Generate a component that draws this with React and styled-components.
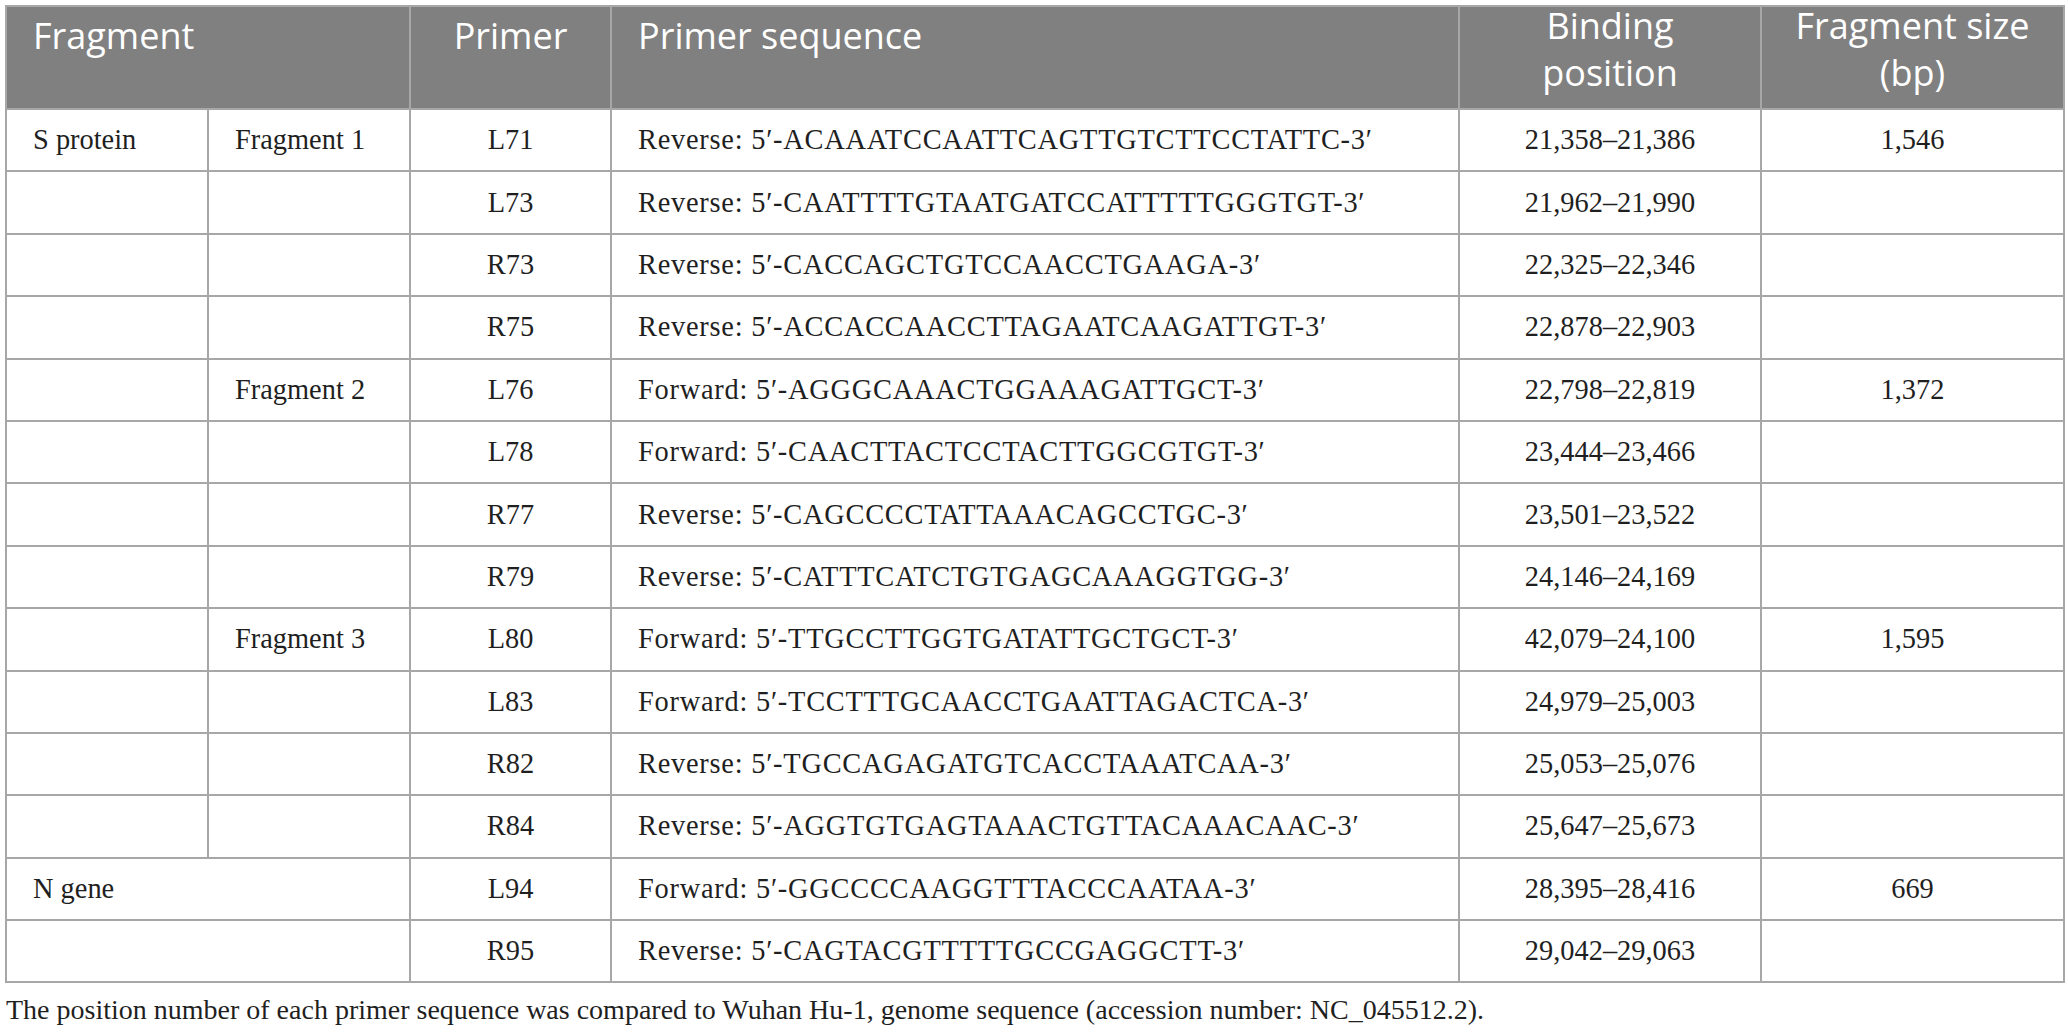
import React from 'react'
import styled, { createGlobalStyle } from 'styled-components'

const GlobalStyle = createGlobalStyle`
    body {
        margin: 0;
        background: #ffffff;
    }
`

const Page = styled.div`
    padding: 5px 0 0 5px;
`

const Table = styled.table`
    border-collapse: collapse;
    table-layout: fixed;
    width: 2058px;
    border: 2px solid #a7a7a7;
`

const HeadRow = styled.tr`
    height: 103px;
`

const HeadCell = styled.th`
    background: #808080;
    color: #ffffff;
    font-family: "Open Sans", "Noto Sans", sans-serif;
    font-weight: 400;
    font-size: 36px;
    line-height: 49px;
    text-align: ${(p) => p.$align || 'left'};
    vertical-align: top;
    padding: 4px 26px 0;
    border: 2px solid #a7a7a7;
`

const HeadLines = styled.span`
    display: block;
    line-height: 47px;
    margin-top: -9px;
`

const BodyRow = styled.tr`
    height: 62.4px;
`

const Cell = styled.td`
    font-family: "Liberation Serif", "Times New Roman", serif;
    font-size: 28.4px;
    color: #1f1f1f;
    text-align: ${(p) => p.$align || 'left'};
    letter-spacing: ${(p) => (p.$seq ? '0.75px' : '0')};
    vertical-align: middle;
    padding: 0 26px;
    border: 2px solid #a7a7a7;
    white-space: nowrap;
`

const Note = styled.p`
    margin: 11px 0 0 1px;
    font-family: "Liberation Serif", "Times New Roman", serif;
    font-size: 28px;
    color: #1f1f1f;
`

const rows = [
    ['S protein', 'Fragment 1', 'L71', 'Reverse: 5′-ACAAATCCAATTCAGTTGTCTTCCTATTC-3′', '21,358–21,386', '1,546'],
    ['', '', 'L73', 'Reverse: 5′-CAATTTTGTAATGATCCATTTTTGGGTGT-3′', '21,962–21,990', ''],
    ['', '', 'R73', 'Reverse: 5′-CACCAGCTGTCCAACCTGAAGA-3′', '22,325–22,346', ''],
    ['', '', 'R75', 'Reverse: 5′-ACCACCAACCTTAGAATCAAGATTGT-3′', '22,878–22,903', ''],
    ['', 'Fragment 2', 'L76', 'Forward: 5′-AGGGCAAACTGGAAAGATTGCT-3′', '22,798–22,819', '1,372'],
    ['', '', 'L78', 'Forward: 5′-CAACTTACTCCTACTTGGCGTGT-3′', '23,444–23,466', ''],
    ['', '', 'R77', 'Reverse: 5′-CAGCCCCTATTAAACAGCCTGC-3′', '23,501–23,522', ''],
    ['', '', 'R79', 'Reverse: 5′-CATTTCATCTGTGAGCAAAGGTGG-3′', '24,146–24,169', ''],
    ['', 'Fragment 3', 'L80', 'Forward: 5′-TTGCCTTGGTGATATTGCTGCT-3′', '42,079–24,100', '1,595'],
    ['', '', 'L83', 'Forward: 5′-TCCTTTGCAACCTGAATTAGACTCA-3′', '24,979–25,003', ''],
    ['', '', 'R82', 'Reverse: 5′-TGCCAGAGATGTCACCTAAATCAA-3′', '25,053–25,076', ''],
    ['', '', 'R84', 'Reverse: 5′-AGGTGTGAGTAAACTGTTACAAACAAC-3′', '25,647–25,673', ''],
]

const geneRows = [
    ['N gene', 'L94', 'Forward: 5′-GGCCCCAAGGTTTACCCAATAA-3′', '28,395–28,416', '669'],
    ['', 'R95', 'Reverse: 5′-CAGTACGTTTTTGCCGAGGCTT-3′', '29,042–29,063', ''],
]

export default function App() {
    return (
        <Page>
            <GlobalStyle />
            <Table>
                <colgroup>
                    <col style={{ width: 202 }} />
                    <col style={{ width: 202 }} />
                    <col style={{ width: 201 }} />
                    <col style={{ width: 848 }} />
                    <col style={{ width: 302 }} />
                    <col style={{ width: 303 }} />
                </colgroup>
                <thead>
                    <HeadRow>
                        <HeadCell colSpan={2}>Fragment</HeadCell>
                        <HeadCell $align="center">Primer</HeadCell>
                        <HeadCell>Primer sequence</HeadCell>
                        <HeadCell $align="center">
                            <HeadLines>Binding<br />position</HeadLines>
                        </HeadCell>
                        <HeadCell $align="center">
                            <HeadLines>Fragment size<br />(bp)</HeadLines>
                        </HeadCell>
                    </HeadRow>
                </thead>
                <tbody>
                    {rows.map((r, i) => (
                        <BodyRow key={i}>
                            <Cell>{r[0]}</Cell>
                            <Cell>{r[1]}</Cell>
                            <Cell $align="center">{r[2]}</Cell>
                            <Cell $seq>{r[3]}</Cell>
                            <Cell $align="center">{r[4]}</Cell>
                            <Cell $align="center">{r[5]}</Cell>
                        </BodyRow>
                    ))}
                    {geneRows.map((r, i) => (
                        <BodyRow key={'n' + i}>
                            <Cell colSpan={2}>{r[0]}</Cell>
                            <Cell $align="center">{r[1]}</Cell>
                            <Cell $seq>{r[2]}</Cell>
                            <Cell $align="center">{r[3]}</Cell>
                            <Cell $align="center">{r[4]}</Cell>
                        </BodyRow>
                    ))}
                </tbody>
            </Table>
            <Note>
                The position number of each primer sequence was compared to Wuhan Hu-1, genome sequence (accession number: NC_045512.2).
            </Note>
        </Page>
    )
}
